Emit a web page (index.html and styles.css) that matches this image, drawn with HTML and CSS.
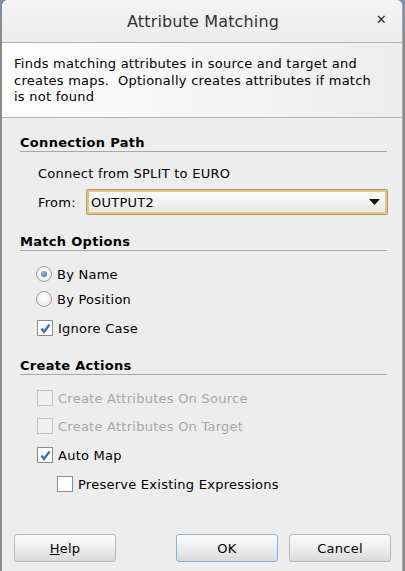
FILE: index.html
```html
<!DOCTYPE html>
<html>
<head>
<meta charset="utf-8">
<link rel="stylesheet" href="styles.css">
</head>
<body>
<div class="dialog">
  <div class="titlebar">
    <span class="title">Attribute Matching</span>
    <span class="close">&#x2715;</span>
  </div>
  <div class="desc">Finds matching attributes in source and target and<br>creates maps.&nbsp; Optionally creates attributes if match<br>is not found</div>
  <div class="content">
    <div class="heading h1">Connection Path</div>
    <div class="row connect">Connect from SPLIT to EURO</div>
    <div class="row fromrow">
      <span class="fromlabel">From:</span>
      <div class="select">
        <span>OUTPUT2</span>
        <svg class="arrow" width="11" height="6" viewBox="0 0 11 6"><path d="M0 0 H11 L5.5 6 Z" fill="#111"/></svg>
      </div>
    </div>
    <div class="heading h2">Match Options</div>
    <div class="row opt r1"><span class="radio on"></span><span>By Name</span></div>
    <div class="row opt r2"><span class="radio"></span><span>By Position</span></div>
    <div class="row opt r3"><span class="check on"><svg width="13" height="13" viewBox="0 0 13 13"><path d="M2.5 6.5 L5 10 L10.5 2.5" fill="none" stroke="#3b6fd6" stroke-width="2.4"/></svg></span><span>Ignore Case</span></div>
    <div class="heading h3">Create Actions</div>
    <div class="row opt disabled c1"><span class="check"></span><span>Create Attributes On Source</span></div>
    <div class="row opt disabled c2"><span class="check"></span><span>Create Attributes On Target</span></div>
    <div class="row opt c3"><span class="check on"><svg width="13" height="13" viewBox="0 0 13 13"><path d="M2.5 6.5 L5 10 L10.5 2.5" fill="none" stroke="#3b6fd6" stroke-width="2.4"/></svg></span><span>Auto Map</span></div>
    <div class="row opt nested c4"><span class="check"></span><span>Preserve Existing Expressions</span></div>
  </div>
  <div class="buttons">
    <button class="btn help"><u>H</u>elp</button>
    <span class="spacer"></span>
    <button class="btn ok">OK</button>
    <button class="btn cancel">Cancel</button>
  </div>
</div>
</body>
</html>
```
FILE: styles.css
```css
* { box-sizing: border-box; }
html, body { margin: 0; padding: 0; }
body {
  width: 405px;
  height: 571px;
  background: linear-gradient(#7f8fa3, #8a8a8a 40px, #8a8a8a);
  font-family: "DejaVu Sans", sans-serif;
  font-size: 13px;
  letter-spacing: 0.25px;
  color: #000;
  overflow: hidden;
}
.dialog {
  margin-left: 2px;
  width: 401px;
  height: 571px;
  background: #ededed;
  border-right: 1px solid #a9a9a9;
  border-radius: 6px 6px 0 0;
  display: flex;
  flex-direction: column;
}
.titlebar {
  height: 43px;
  flex: none;
  position: relative;
  display: flex;
  align-items: center;
  justify-content: center;
  background: linear-gradient(#f4f4f4, #ececec);
  border-bottom: 1px solid #b3b3b3;
  border-radius: 6px 6px 0 0;
}
.title {
  font-size: 16px;
  letter-spacing: 0.15px;
  color: #333;
  margin-left: 2px;
}
.close {
  position: absolute;
  right: 15px;
  top: 12px;
  font-size: 13px;
  font-weight: bold;
  color: #2e2e2e;
}
.desc {
  height: 75px;
  flex: none;
  padding: 13px 10px 0 12px;
  line-height: 16.5px;
  white-space: nowrap;
  background: linear-gradient(90deg, #fefefe, #ededed);
  border-bottom: 1px solid #b3b3b3;
}
.content {
  flex: 1;
  padding: 0 15px 0 18px;
  display: flex;
  flex-direction: column;
}
.heading {
  height: 17px;
  font-weight: bold;
  font-size: 13px;
  letter-spacing: 0.3px;
  line-height: 16px;
  border-bottom: 1px solid #a5a8ad;
}
.h1 { margin-top: 17px; }
.h2 { margin-top: 19px; }
.h3 { margin-top: 20px; }
.row {
  display: flex;
  align-items: center;
  height: 20px;
}
.connect { margin-top: 11px; padding-left: 18px; }
.fromrow { margin-top: 6px; height: 26px; padding-left: 18px; }
.fromlabel { width: 48px; }
.select {
  flex: 1;
  height: 26px;
  margin-right: -1px;
  border: 1px solid #9a9a9a;
  box-shadow: inset 0 0 0 2px #f3c36a;
  border-radius: 2px;
  background: linear-gradient(#ffffff, #e6e6e6);
  display: flex;
  align-items: center;
  padding: 0 7px 0 4px;
  justify-content: space-between;
}
.opt { padding-left: 16px; }
.r1 { margin-top: 13px; }
.r2 { margin-top: 5px; }
.r3 { margin-top: 9px; }
.c1 { margin-top: 13px; }
.c2 { margin-top: 8px; }
.c3 { margin-top: 9px; }
.c4 { margin-top: 9px; }
.nested { padding-left: 36px; }
.radio {
  width: 16px;
  height: 16px;
  border-radius: 50%;
  border: 1px solid #9c9c9c;
  background: radial-gradient(circle at 50% 40%, #ffffff, #e4e4e4);
  margin-right: 5px;
  flex: none;
  position: relative;
}
.radio.on::after {
  content: "";
  position: absolute;
  left: 4px;
  top: 4px;
  width: 6px;
  height: 6px;
  border-radius: 50%;
  background: radial-gradient(circle at 40% 35%, #8fb3f0, #2f64c8);
}
.check {
  width: 16px;
  height: 16px;
  border: 1px solid #8c8c8c;
  background: #fff;
  margin: 0 5px 0 1px;
  flex: none;
  display: flex;
  align-items: center;
  justify-content: center;
}
.disabled { color: #a9a99f; }
.disabled .check { border-color: #c3c3bd; background: #f0f0f0; }
.buttons {
  flex: none;
  display: flex;
  padding: 0 11px 9px 12px;
  gap: 11px;
}
.spacer { flex: 1; }
.btn {
  width: 102px;
  height: 28px;
  font-family: "DejaVu Sans", sans-serif;
  font-size: 13px;
  letter-spacing: 0.25px;
  color: #000;
  border: 1px solid #b9b9b9;
  border-radius: 3px;
  background: linear-gradient(#fbfbfb, #f0f0f0 45%, #dadada);
  padding: 0;
}
.btn.ok { border-color: #8fb0dc; }
```
